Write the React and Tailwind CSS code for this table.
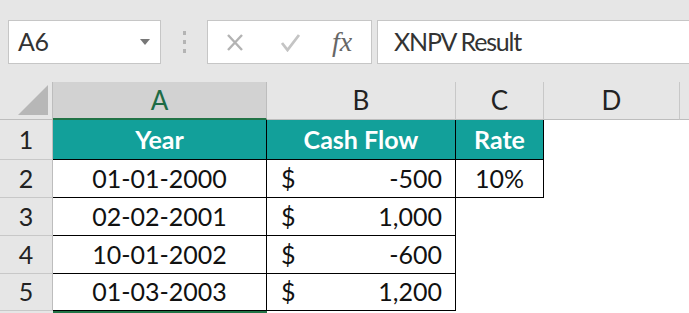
import React from "react";

const F = { fontFamily: "Lato, 'Open Sans', sans-serif" };

function Cell({ w, className = "", children }) {
  return (
    <div className={`box-border flex items-center h-full shrink-0 ${className}`} style={{ width: w }}>
      {children}
    </div>
  );
}

function Row({ n, h, children }) {
  return (
    <div className="flex" style={{ height: h }}>
      <div className="box-border w-[53px] shrink-0 h-full bg-[#e6e6e6] border-r border-r-[#bdbdbd] border-b border-b-[#c8c8c8] flex items-center justify-center text-[25px] text-[#222]">
        {n}
      </div>
      {children}
    </div>
  );
}

export default function App() {
  const rows = [
    ["01-01-2000", "-500", "10%"],
    ["02-02-2001", "1,000"],
    ["10-01-2002", "-600"],
    ["01-03-2003", "1,200"],
  ];
  return (
    <div className="w-[689px] h-[313px] overflow-hidden bg-white relative" style={F}>
      {/* top bar */}
      <div className="h-[82px] bg-[#e6e6e6] flex items-start pt-[20px]">
        <div className="ml-[8px] w-[153px] h-[44px] box-border bg-white border border-[#c6c6c6] flex items-center justify-between pl-[9px] pr-[10px]">
          <span className="text-[25px] text-[#333] tracking-[-0.5px]">A6</span>
          <svg width="10" height="6" viewBox="0 0 10 6"><path d="M0 0h10L5 6z" fill="#777" /></svg>
        </div>
        <div className="w-[46px] h-[44px] flex flex-col items-center justify-center gap-[5px]">
          <div className="w-[3px] h-[4px] bg-[#b4b4b4]" />
          <div className="w-[3px] h-[4px] bg-[#b4b4b4]" />
          <div className="w-[3px] h-[4px] bg-[#b4b4b4]" />
        </div>
        <div className="w-[165px] h-[44px] box-border bg-white border border-[#c6c6c6] flex items-center">
          <svg className="ml-[18px]" width="18" height="19" viewBox="0 0 18 19"><path d="M2 2L16 17M16 2L2 17" stroke="#b3b3b3" strokeWidth="2.4" /></svg>
          <svg className="ml-[36px]" width="21" height="19" viewBox="0 0 21 19"><path d="M2 10L7.5 17L19 2" stroke="#c4c4c4" strokeWidth="2.8" fill="none" /></svg>
          <span className="ml-[31px] text-[28px] italic text-[#666]" style={{ fontFamily: "'Liberation Serif', serif" }}>fx</span>
        </div>
        <div className="ml-[5px] flex-1 h-[44px] box-border bg-white border border-[#c6c6c6] border-r-0 flex items-center pl-[16px]">
          <span className="text-[25px] text-[#333] tracking-[-1.2px]">XNPV Result</span>
        </div>
      </div>

      {/* column headers */}
      <div className="flex h-[38px] text-[26px]">
        <div className="relative w-[53px] shrink-0 h-full bg-[#e6e6e6] border-r border-[#bdbdbd] box-border border-b border-b-[#bdbdbd]">
          <svg className="absolute right-[4px] bottom-[4px]" width="30" height="30" viewBox="0 0 30 30"><path d="M30 0V30H0z" fill="#b7b7b7" /></svg>
        </div>
        <Cell w={214} className="justify-center bg-[#d2d2d2] text-[#1e6b45] border-r border-r-[#bdbdbd] border-b-2 border-b-[#217346]">A</Cell>
        <Cell w={189} className="justify-center bg-[#e6e6e6] text-[#222] border-r border-r-[#c8c8c8] border-b border-b-[#bdbdbd]">B</Cell>
        <Cell w={88} className="justify-center bg-[#e6e6e6] text-[#222] border-r border-r-[#c8c8c8] border-b border-b-[#bdbdbd]">C</Cell>
        <Cell w={136} className="justify-center bg-[#e6e6e6] text-[#222] border-r border-r-[#c8c8c8] border-b border-b-[#bdbdbd]">D</Cell>
        <Cell w={9} className="bg-[#e6e6e6] border-b border-b-[#bdbdbd]" />
      </div>

      {/* row 1 */}
      <Row n={1} h={40}>
        <Cell w={214} className="justify-center bg-[#12a09a] text-white font-bold text-[25px] border-r border-b border-black">Year</Cell>
        <Cell w={189} className="justify-center bg-[#12a09a] text-white font-bold text-[25px] border-r border-b border-black">Cash Flow</Cell>
        <Cell w={88} className="justify-center bg-[#12a09a] text-white font-bold text-[25px] border-r border-b border-black">Rate</Cell>
      </Row>

      {rows.map((r, i) => (
        <Row key={i} n={i + 2} h={i === 3 ? 37 : 38}>
          <Cell w={214} className="justify-center text-[25px] text-[#111] border-r border-b border-black">{r[0]}</Cell>
          <Cell w={189} className="justify-between text-[25px] text-[#111] border-r border-b border-black pl-[14px] pr-[13px]">
            <span>$</span>
            <span>{r[1]}</span>
          </Cell>
          {r[2] && (
            <Cell w={88} className="justify-center text-[25px] text-[#111] border-r border-b border-black">{r[2]}</Cell>
          )}
        </Row>
      ))}
      <div className="flex">
        <div className="w-[53px] h-[3px] bg-[#e6e6e6]" />
        <div className="w-[214px] h-[3px] bg-[#217346]" />
      </div>
    </div>
  );
}
